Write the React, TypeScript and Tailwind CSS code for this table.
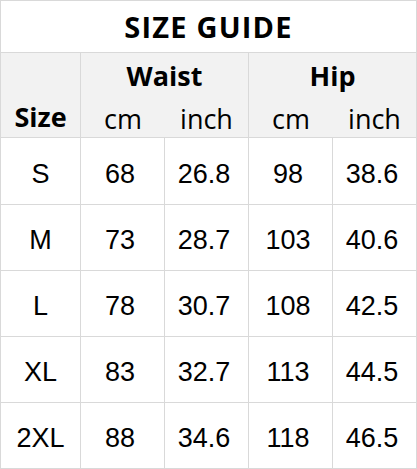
import React from "react";

const rows = [
  ["S", "68", "26.8", "98", "38.6"],
  ["M", "73", "28.7", "103", "40.6"],
  ["L", "78", "30.7", "108", "42.5"],
  ["XL", "83", "32.7", "113", "44.5"],
  ["2XL", "88", "34.6", "118", "46.5"],
];

export default function App() {
  return (
    <div className="w-[417px] h-[469px] bg-white text-black">
      <div className="grid grid-cols-[80px_84px_84px_84px_84px] border-l border-t border-[#d9d9d9] w-[417px] font-['Open_Sans','Noto_Sans',sans-serif]">
        <div className="col-span-5 h-[52px] border-r border-b border-[#d9d9d9] flex items-center justify-center text-[29px] tracking-[1.2px] font-bold">
          SIZE GUIDE
        </div>
        <div className="row-span-2 bg-[#f2f2f2] border-r border-b border-[#d9d9d9] flex items-end justify-center pb-0 text-[27px] font-bold">
          Size
        </div>
        <div className="col-span-2 h-[42px] bg-[#f2f2f2] border-r border-[#d9d9d9] flex items-center justify-center pt-[4px] text-[27px] font-bold">
          Waist
        </div>
        <div className="col-span-2 h-[42px] bg-[#f2f2f2] border-r border-[#d9d9d9] flex items-center justify-center pt-[4px] text-[27px] font-bold">
          Hip
        </div>
        <div className="h-[43px] bg-[#f2f2f2] border-b border-[#d9d9d9] flex items-center justify-center pt-[6px] text-[27px]">
          cm
        </div>
        <div className="h-[43px] bg-[#f2f2f2] border-r border-b border-[#d9d9d9] flex items-center justify-center pt-[6px] text-[27px]">
          inch
        </div>
        <div className="h-[43px] bg-[#f2f2f2] border-b border-[#d9d9d9] flex items-center justify-center pt-[6px] text-[27px]">
          cm
        </div>
        <div className="h-[43px] bg-[#f2f2f2] border-r border-b border-[#d9d9d9] flex items-center justify-center pt-[6px] text-[27px]">
          inch
        </div>
        {rows.map((r, i) =>
          r.map((v, j) => (
            <div
              key={`${i}-${j}`}
              className={`${i === 0 ? "h-[67px]" : "h-[66px]"} border-r border-b border-[#d9d9d9] flex items-center justify-center pt-[6px] text-[27px] font-['Liberation_Sans',Arial,sans-serif] ${j === 0 ? "" : "pr-[5px]"}`}
            >
              {v}
            </div>
          ))
        )}
      </div>
    </div>
  );
}
